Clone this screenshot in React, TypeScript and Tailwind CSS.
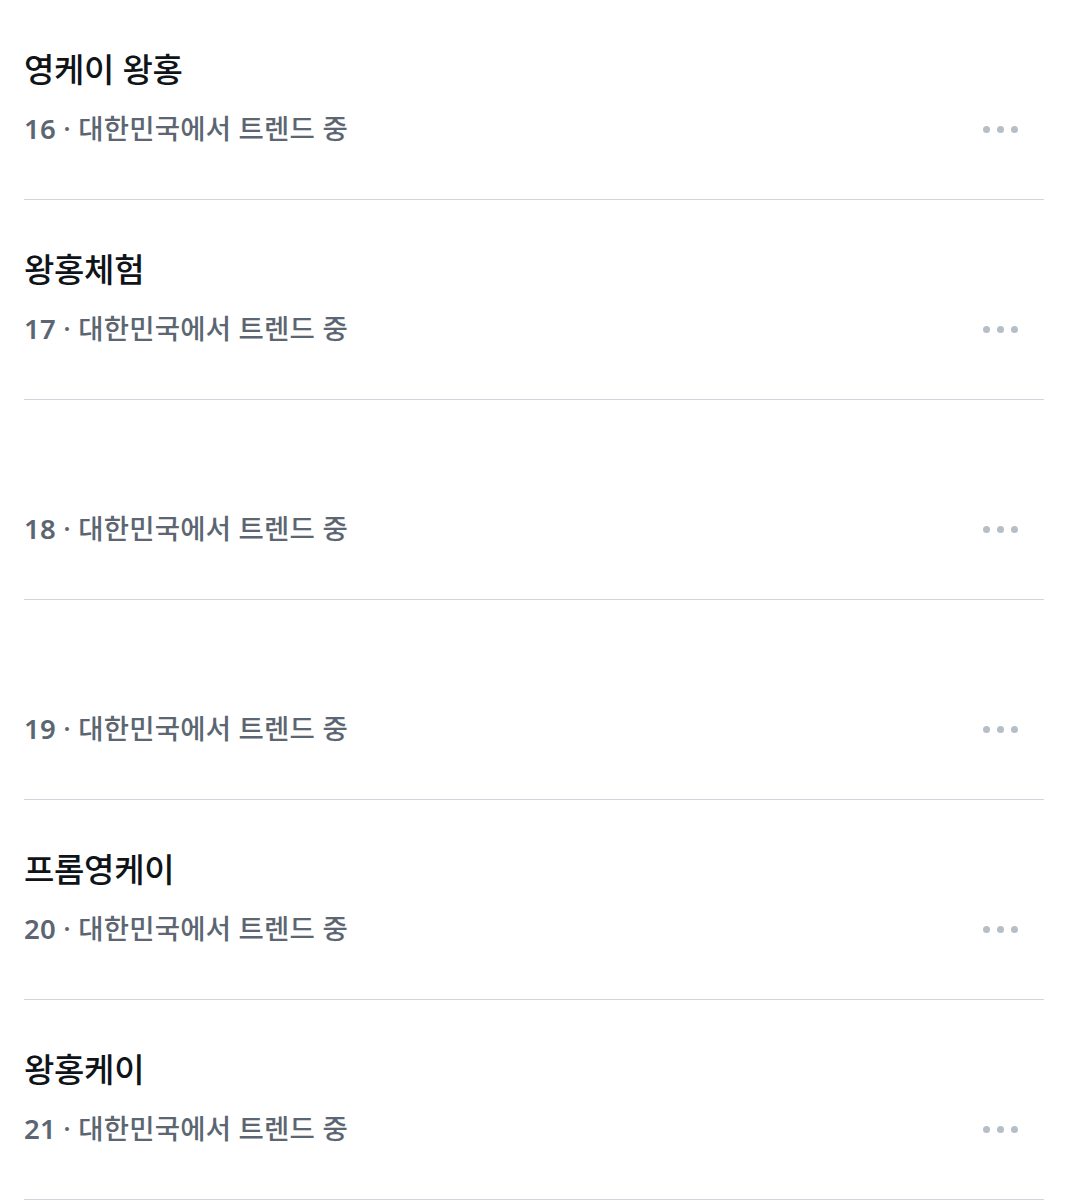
import React from 'react';

const TRENDS = [
  { rank: 16, title: '영케이 왕홍' },
  { rank: 17, title: '왕홍체험' },
  { rank: 18, title: '' },
  { rank: 19, title: '' },
  { rank: 20, title: '프롬영케이' },
  { rank: 21, title: '왕홍케이' },
];

const FONT = { fontFamily: '"Noto Sans", "Noto Sans CJK KR", sans-serif' };

const MoreDots: React.FC = () => (
  <div className="flex items-center gap-[7px]">
    <span className="w-[7px] h-[7px] rounded-full bg-[#b6bec7]" />
    <span className="w-[7px] h-[7px] rounded-full bg-[#b6bec7]" />
    <span className="w-[7px] h-[7px] rounded-full bg-[#b6bec7]" />
  </div>
);

const TrendRow: React.FC<{ rank: number; title: string }> = ({ rank, title }) => (
  <div className="h-[200px] border-b-[1.5px] border-[#d0d6de] pt-[50px]">
    <div className="h-[40px] leading-[40px] text-[33px] font-medium text-[#0f1419] tracking-[-0.3px]">
      {title}
    </div>
    <div className="mt-[21px] h-[36px] flex items-center justify-between">
      <span className="text-[27.5px] font-medium text-[#5b6672] leading-[36px] tracking-[0.2px]">
        <span className="font-semibold">{rank}</span> · 대한민국에서 트렌드 중
      </span>
      <div className="pr-[26px]">
        <MoreDots />
      </div>
    </div>
  </div>
);

export default function App() {
  return (
    <div className="w-[1068px] min-h-[1200px] bg-white px-[24px]" style={FONT}>
      {TRENDS.map((t) => (
        <TrendRow key={t.rank} rank={t.rank} title={t.title} />
      ))}
    </div>
  );
}
